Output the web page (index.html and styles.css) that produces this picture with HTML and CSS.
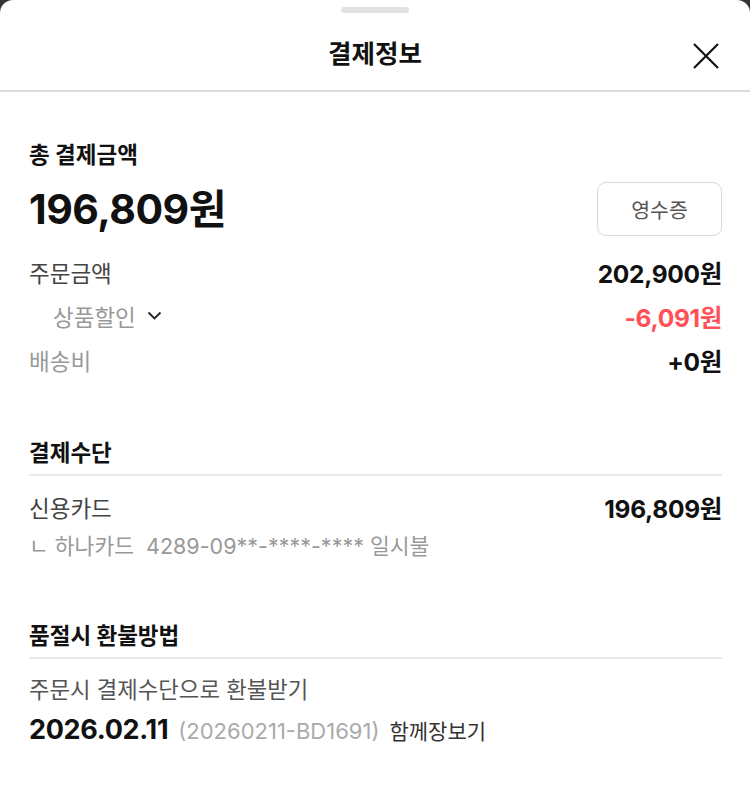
FILE: index.html
```html
<!DOCTYPE html>
<html lang="ko">
<head>
<meta charset="utf-8">
<link rel="stylesheet" href="styles.css">
</head>
<body>
<div class="sheet">
  <div class="handle"></div>
  <header class="head">
    <h1 class="title">결제정보</h1>
    <button class="close" aria-label="닫기">
      <svg width="26" height="26" viewBox="0 0 26 26"><path d="M1 1L25 25M25 1L1 25" stroke="#111" stroke-width="2.2" fill="none"/></svg>
    </button>
  </header>
  <main class="content">
    <section class="total">
      <h2 class="sec-title">총 결제금액</h2>
      <div class="total-row">
        <div class="total-amt">196,809원</div>
        <button class="receipt">영수증</button>
      </div>
      <div class="row first">
        <span class="label dark">주문금액</span>
        <span class="val">202,900원</span>
      </div>
      <div class="row">
        <span class="label sub">상품할인
          <svg class="chev" width="15" height="10" viewBox="0 0 15 10"><path d="M1.5 1.5L7.5 7.5L13.5 1.5" stroke="#222" stroke-width="1.8" fill="none"/></svg>
        </span>
        <span class="val red">-6,091원</span>
      </div>
      <div class="row">
        <span class="label">배송비</span>
        <span class="val">+0원</span>
      </div>
    </section>
    <section class="block">
      <h2 class="sec-title ruled">결제수단</h2>
      <div class="row r2">
        <span class="label dark">신용카드</span>
        <span class="val">196,809원</span>
      </div>
      <div class="card-line">ㄴ 하나카드&nbsp; 4289-09**-****-**** 일시불</div>
    </section>
    <section class="block b2">
      <h2 class="sec-title ruled">품절시 환불방법</h2>
      <div class="refund">주문시 결제수단으로 환불받기</div>
      <div class="order">
        <span class="date">2026.02.11</span>
        <span class="ordno">(20260211-BD1691)</span>
        <span class="together">함께장보기</span>
      </div>
    </section>
  </main>
</div>
</body>
</html>
```
FILE: styles.css
```css
* { box-sizing: border-box; }
html, body { margin: 0; padding: 0; }
body {
  background: #333;
  font-family: Inter, "Noto Sans CJK KR", sans-serif;
  color: #111;
}
.sheet {
  background: #fff;
  border-radius: 13px 13px 0 0;
  min-height: 810px;
}
.handle {
  width: 68px;
  height: 6px;
  border-radius: 3px;
  background: #e3e3e3;
  margin: 0 auto;
  position: relative;
  top: 7px;
}
.head {
  height: 86px;
  display: flex;
  align-items: center;
  justify-content: center;
  border-bottom: 2px solid #dadde0;
  position: relative;
}
.title {
  margin: 0;
  font-size: 25.5px;
  font-weight: 700;
  padding-top: 12px;
  line-height: 30px;
}
.close {
  position: absolute;
  right: 31px;
  top: 37px;
  background: none;
  border: 0;
  padding: 0;
  width: 26px;
  height: 26px;
}
.close svg { display: block; }
.content {
  padding: 48px 28px 0 29px;
}
.sec-title {
  margin: 0;
  font-size: 22.5px;
  font-weight: 700;
  line-height: 30px;
}
.total-row {
  display: flex;
  justify-content: space-between;
  align-items: center;
  margin-top: 12px;
}
.total-amt {
  font-size: 41px;
  font-weight: 700;
  letter-spacing: -0.5px;
  line-height: 54px;
}
.receipt {
  width: 125px;
  height: 54px;
  border: 1.5px solid #d9d9d9;
  border-radius: 9px;
  background: #fff;
  font-family: inherit;
  font-size: 20.5px;
  color: #555;
  padding: 0;
}
.row {
  display: flex;
  justify-content: space-between;
  align-items: center;
  height: 44px;
}
.row.first { margin-top: 14px; }
.label {
  font-size: 22.5px;
  color: #999;
  display: flex;
  align-items: center;
}
.label.dark { color: #444; }
.label.sub { padding-left: 24px; }
.chev { margin-left: 11px; }
.val {
  font-size: 24.5px;
  font-weight: 700;
  letter-spacing: -0.3px;
}
.val.red { color: #ff5058; }
.block { margin-top: 56px; }
.block.b2 { margin-top: 58px; }
.ruled {
  padding-bottom: 6px;
  border-bottom: 2px solid #e9e9e9;
}
.r2 { margin-top: 9px; }
.card-line {
  font-size: 21.5px;
  color: #999;
  line-height: 34px;
}
.refund {
  font-size: 22.3px;
  color: #555;
  margin-top: 15px;
  line-height: 32px;
}
.order {
  display: flex;
  align-items: baseline;
  gap: 10px;
  margin-top: 6px;
  line-height: 36px;
}
.date {
  font-size: 27px;
  font-weight: 700;
  letter-spacing: -0.3px;
}
.ordno {
  font-size: 22px;
  color: #aaa;
}
.together {
  font-size: 21px;
  color: #333;
}
```
